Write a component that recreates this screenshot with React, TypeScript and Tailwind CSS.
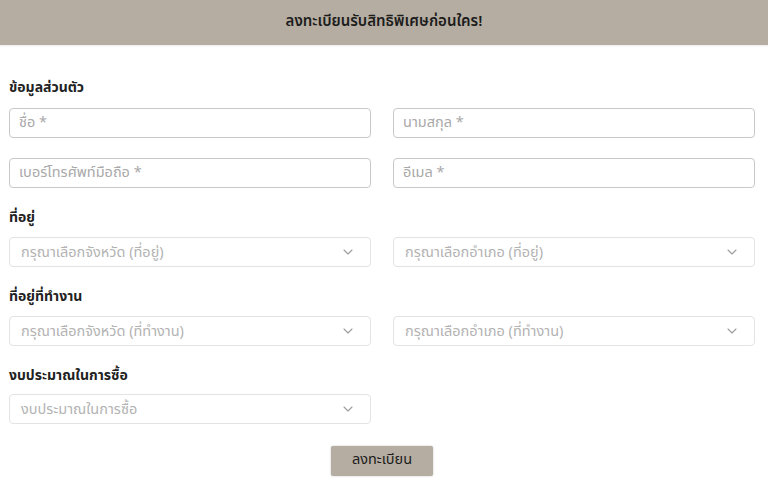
import { ChevronDown } from "lucide-react";

const font = { fontFamily: '"Noto Sans Thai", "Noto Sans", "Liberation Sans", sans-serif' };

function TextField({ placeholder }: { placeholder: string }) {
  return (
    <div className="flex h-[30px] items-center rounded-[4px] border border-[#c9c9c9] bg-white px-[9px]">
      <span className="pt-[1px] text-[14.5px] text-[#a9a9a9]">{placeholder}</span>
    </div>
  );
}

function SelectField({ placeholder }: { placeholder: string }) {
  return (
    <div className="flex h-[30px] items-center justify-between rounded-[4px] border border-[#e3e3e3] bg-white pr-[14px] pl-[11px]">
      <span className="pt-[3px] text-[14.5px] text-[#b3b3b3]">{placeholder}</span>
      <ChevronDown className="h-4 w-4 text-[#9c9c9c]" strokeWidth={1.6} />
    </div>
  );
}

function Label({ children }: { children: string }) {
  return <div className="h-[20px] text-[14px] leading-[20px] font-bold text-[#222]">{children}</div>;
}

export default function App() {
  return (
    <div className="h-[500px] w-[768px] bg-white" style={font}>
      {/* Header */}
      <div className="flex h-[45px] items-center justify-center bg-[#b5ada1] shadow-[0_1px_2px_rgba(0,0,0,0.08)]">
        <span className="text-[15px] font-semibold text-[#1c1c1c]">ลงทะเบียนรับสิทธิพิเศษก่อนใคร!</span>
      </div>

      <div className="pt-[33px] pr-[13px] pl-[9px]">
        <Label>ข้อมูลส่วนตัว</Label>
        <div className="mt-[10px] grid grid-cols-2 gap-x-[22px] gap-y-[20px]">
          <TextField placeholder="ชื่อ *" />
          <TextField placeholder="นามสกุล *" />
          <TextField placeholder="เบอร์โทรศัพท์มือถือ *" />
          <TextField placeholder="อีเมล *" />
        </div>

        <div className="mt-[20px]">
          <Label>ที่อยู่</Label>
        </div>
        <div className="mt-[9px] grid grid-cols-2 gap-x-[22px]">
          <SelectField placeholder="กรุณาเลือกจังหวัด (ที่อยู่)" />
          <SelectField placeholder="กรุณาเลือกอำเภอ (ที่อยู่)" />
        </div>

        <div className="mt-[20px]">
          <Label>ที่อยู่ที่ทำงาน</Label>
        </div>
        <div className="mt-[9px] grid grid-cols-2 gap-x-[22px]">
          <SelectField placeholder="กรุณาเลือกจังหวัด (ที่ทำงาน)" />
          <SelectField placeholder="กรุณาเลือกอำเภอ (ที่ทำงาน)" />
        </div>

        <div className="mt-[20px]">
          <Label>งบประมาณในการซื้อ</Label>
        </div>
        <div className="mt-[8px] grid grid-cols-2 gap-x-[22px]">
          <SelectField placeholder="งบประมาณในการซื้อ" />
        </div>

        <div className="mt-[22px] flex justify-center">
          <button className="h-[30px] w-[102px] rounded-[2px] bg-[#b5ada1] text-[14.5px] text-[#1c1c1c] shadow-[0_0_2px_rgba(0,0,0,0.25)]">
            ลงทะเบียน
          </button>
        </div>
      </div>
    </div>
  );
}
